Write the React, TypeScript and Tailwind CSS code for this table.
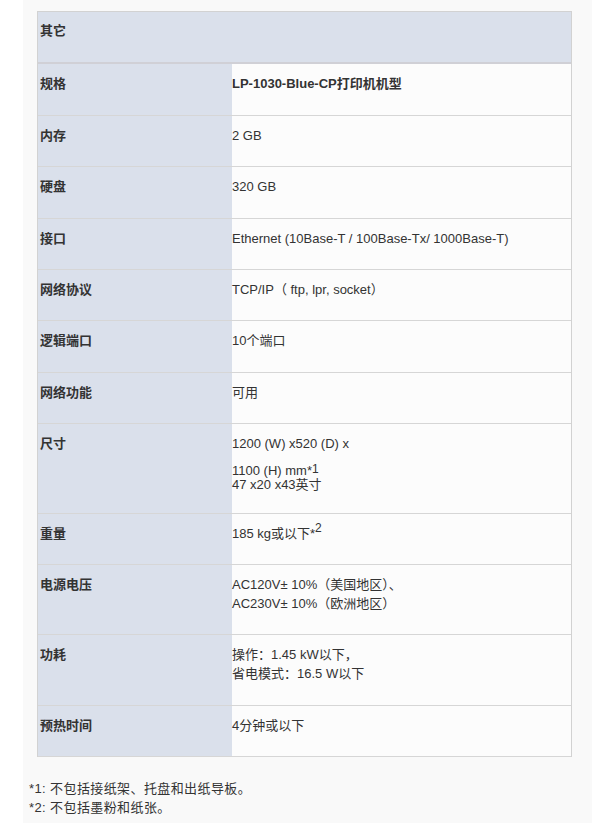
import React from "react";

const font = { fontFamily: '"Liberation Sans", Arial, "Noto Sans CJK SC", sans-serif' };

type Row = { label: string; h: string; value: React.ReactNode };

const rows: Row[] = [
  { label: "规格", h: "h-[52px]", value: <div className="font-bold">LP-1030-Blue-CP打印机机型</div> },
  { label: "内存", h: "h-[51px]", value: <div>2 GB</div> },
  { label: "硬盘", h: "h-[52px]", value: <div>320 GB</div> },
  { label: "接口", h: "h-[51px]", value: <div>Ethernet (10Base-T / 100Base-Tx/ 1000Base-T)</div> },
  { label: "网络协议", h: "h-[51px]", value: <div>TCP/IP（ ftp, lpr, socket）</div> },
  { label: "逻辑端口", h: "h-[52px]", value: <div>10个端口</div> },
  { label: "网络功能", h: "h-[51px]", value: <div>可用</div> },
  {
    label: "尺寸",
    h: "h-[90px]",
    value: (
      <div>
        <div className="leading-[20px]">1200 (W) x520 (D) x</div>
        <div className="mt-[10px] leading-[14px]">
          1100 (H) mm*<sup className="text-[12px] leading-none relative -top-[2px]">1</sup>
        </div>
        <div className="leading-[13px]">47 x20 x43英寸</div>
      </div>
    ),
  },
  {
    label: "重量",
    h: "h-[51px]",
    value: (
      <div>
        185 kg或以下*<sup className="text-[12px] leading-none">2</sup>
      </div>
    ),
  },
  {
    label: "电源电压",
    h: "h-[70px]",
    value: (
      <div>
        <div className="leading-[19px]">AC120V± 10%（美国地区）、</div>
        <div className="leading-[19px]">AC230V± 10%（欧洲地区）</div>
      </div>
    ),
  },
  {
    label: "功耗",
    h: "h-[71px]",
    value: (
      <div>
        <div className="leading-[19px]">操作：1.45 kW以下，</div>
        <div className="leading-[19px]">省电模式：16.5 W以下</div>
      </div>
    ),
  },
  { label: "预热时间", h: "h-[51px]", value: <div>4分钟或以下</div> },
];

export default function App() {
  return (
    <div className="w-[592px] h-[823px] bg-white text-[#333] text-[13px] overflow-hidden" style={font}>
      <div className="ml-[23px] h-full bg-[#f9f9f9] pt-[11px]">
        <div className="ml-[14px] w-[535px] border-l border-r border-t border-[#d2d2d2] bg-[#fcfcfc]">
          <div className="h-[52px] bg-[#dae0eb] border-b-2 border-[#d0d0d6] pt-[9px] pl-[2px] font-bold leading-[20px] text-[13px]">
            其它
          </div>
          {rows.map((r) => (
            <div key={r.label} className={`flex ${r.h} border-b border-[#d6d6d6]`}>
              <div className="w-[194px] shrink-0 bg-[#dae0eb] pt-[10px] pl-[2px] font-bold leading-[20px]">
                {r.label}
              </div>
              <div className="flex-1 pt-[10px] leading-[20px] text-[#333]">{r.value}</div>
            </div>
          ))}
        </div>
        <div className="mt-[22px] ml-[6px] leading-[19px] text-[13px] tracking-[0.4px]">
          <div>*1: 不包括接纸架、托盘和出纸导板。</div>
          <div>*2: 不包括墨粉和纸张。</div>
        </div>
      </div>
    </div>
  );
}
